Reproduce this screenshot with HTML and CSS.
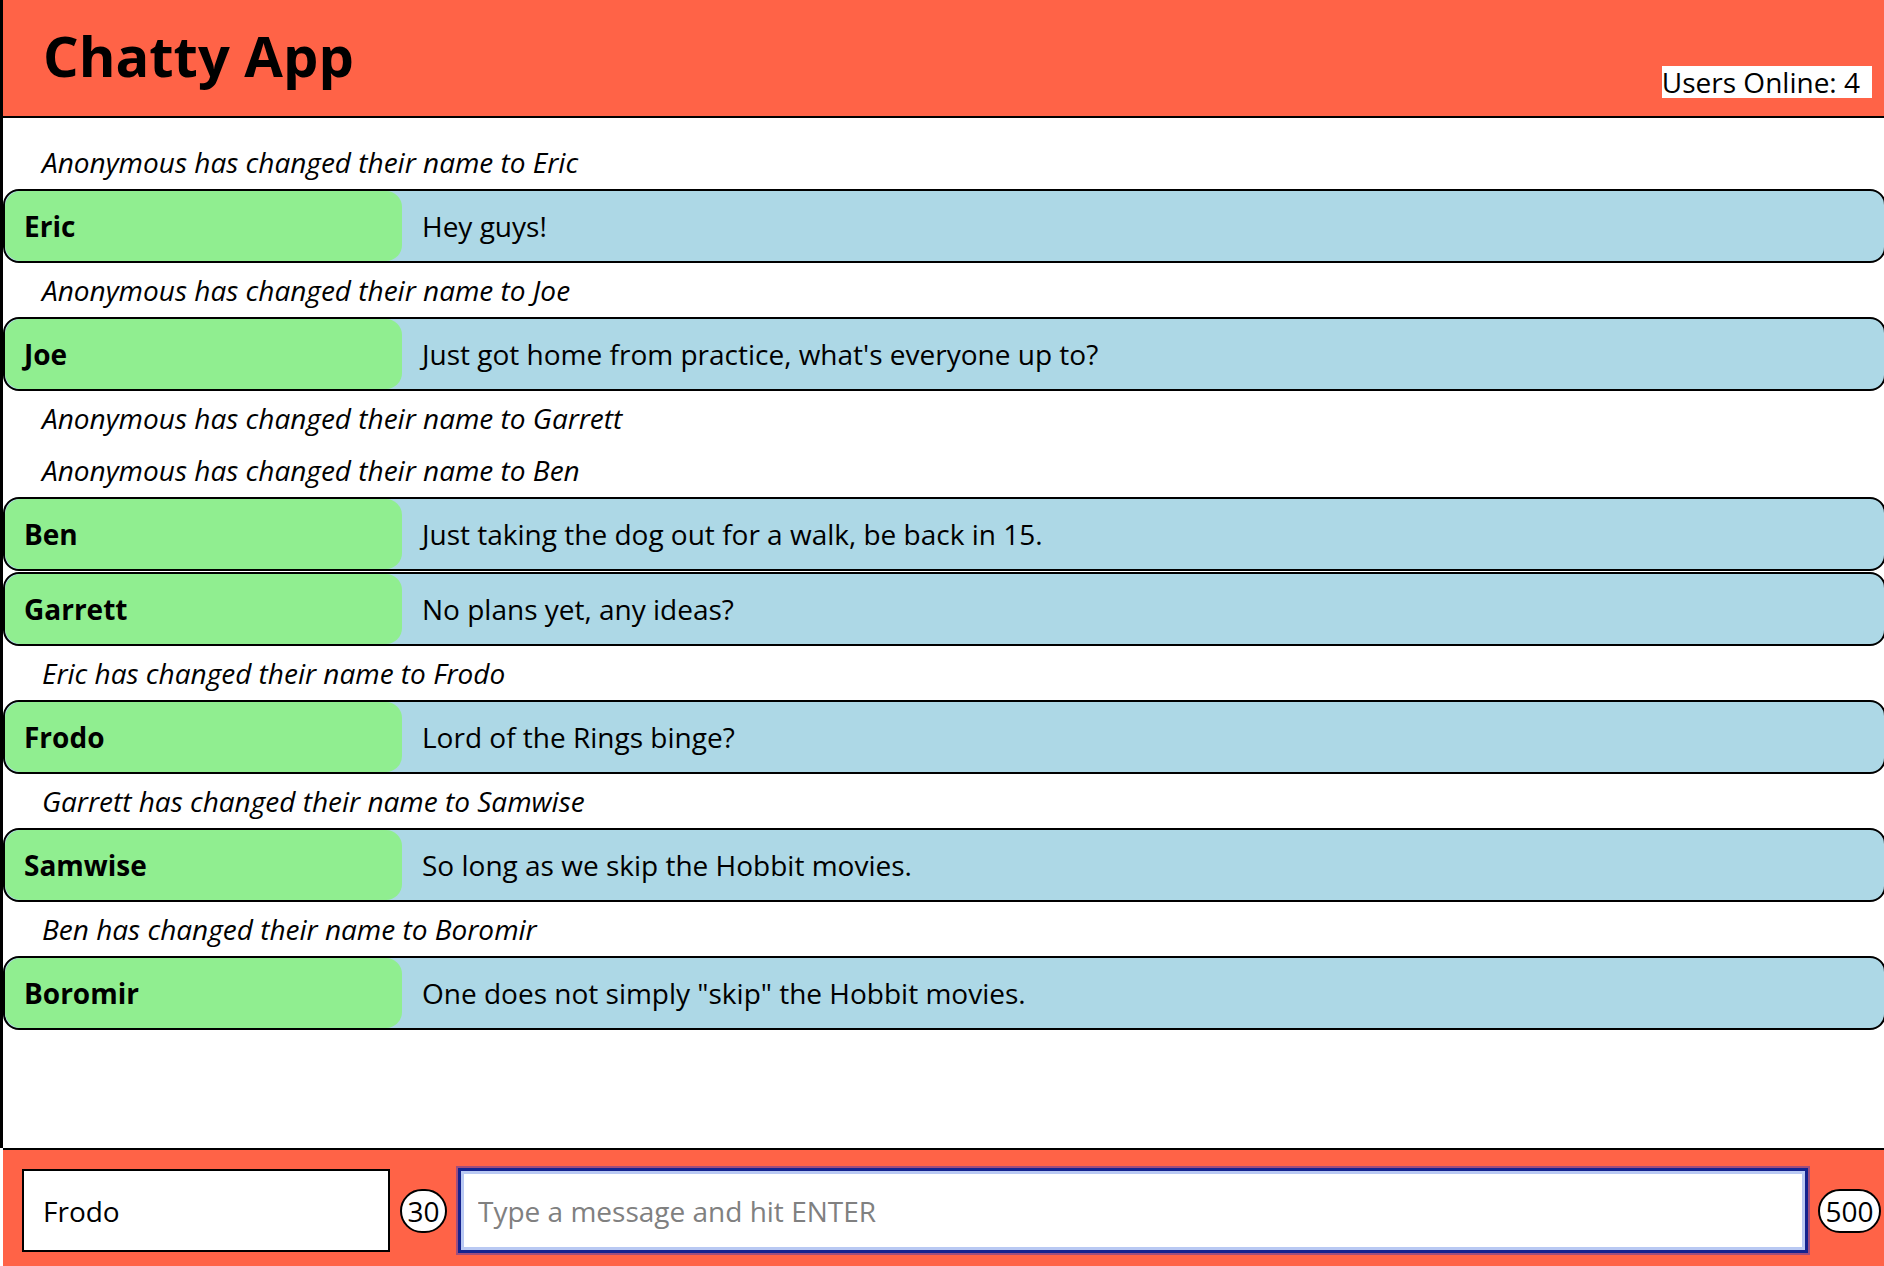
FILE: index.html
```html
<!DOCTYPE html>
<html lang="en">
<head>
<meta charset="utf-8">
<title>Chatty App</title>
<link rel="stylesheet" href="styles.css">
</head>
<body>
<div class="app">
  <nav class="navbar">
    <h1 class="brand">Chatty App</h1>
    <span class="online">Users Online: 4</span>
  </nav>
  <main class="messages">
    <div class="notification">Anonymous has changed their name to Eric</div>
    <div class="message"><span class="username">Eric</span><span class="content">Hey guys!</span></div>
    <div class="notification">Anonymous has changed their name to Joe</div>
    <div class="message"><span class="username">Joe</span><span class="content">Just got home from practice, what's everyone up to?</span></div>
    <div class="notification">Anonymous has changed their name to Garrett</div>
    <div class="notification">Anonymous has changed their name to Ben</div>
    <div class="message"><span class="username">Ben</span><span class="content">Just taking the dog out for a walk, be back in 15.</span></div>
    <div class="message"><span class="username">Garrett</span><span class="content">No plans yet, any ideas?</span></div>
    <div class="notification">Eric has changed their name to Frodo</div>
    <div class="message"><span class="username">Frodo</span><span class="content">Lord of the Rings binge?</span></div>
    <div class="notification">Garrett has changed their name to Samwise</div>
    <div class="message"><span class="username">Samwise</span><span class="content">So long as we skip the Hobbit movies.</span></div>
    <div class="notification">Ben has changed their name to Boromir</div>
    <div class="message"><span class="username">Boromir</span><span class="content">One does not simply "skip" the Hobbit movies.</span></div>
  </main>
</div>
<footer class="chatbar">
  <input class="chatbar-username" type="text" value="Frodo">
  <span class="counter">30</span>
  <input class="chatbar-message" type="text" placeholder="Type a message and hit ENTER">
  <span class="counter counter-wide">500</span>
</footer>
</body>
</html>
```
FILE: styles.css
```css
* { box-sizing: border-box; }
html, body { margin: 0; padding: 0; }
body {
  font-family: "Open Sans", "DejaVu Sans", sans-serif;
  font-size: 28px;
  color: #000;
  background: #fff;
  height: 100vh;
  display: flex;
  flex-direction: column;
  overflow: hidden;
}
.app {
  flex: 1;
  border-left: 3px solid #000;
  min-height: 0;
}
.navbar {
  height: 118px;
  background: tomato;
  border-bottom: 2px solid #000;
  display: flex;
  justify-content: space-between;
  align-items: flex-start;
  padding: 0 12px 0 40px;
}
.brand {
  margin: 0;
  margin-top: 24px;
  font-size: 56px;
  font-weight: 700;
  line-height: 62px;
}
.online {
  margin-top: 66px;
  background: #fff;
  height: 32px;
  line-height: 32px;
  padding-right: 12px;
  font-size: 28px;
}
.messages {
  padding-top: 18px;
}
.notification {
  height: 52px;
  line-height: 52px;
  padding-left: 39px;
  font-style: italic;
}
.message {
  display: flex;
  align-items: stretch;
  height: 74px;
  margin: 1px 0;
  background: lightblue;
  border: 2px solid #000;
  border-radius: 16px;
  width: 1883px;
  overflow: hidden;
}
.username {
  width: 397px;
  flex: none;
  background: lightgreen;
  border-radius: 16px;
  font-weight: 700;
  padding-left: 19px;
  display: flex;
  align-items: center;
}
.content {
  padding-left: 20px;
  display: flex;
  align-items: center;
}
.chatbar {
  flex: none;
  height: 118px;
  margin-left: 3px;
  background: tomato;
  border-top: 2px solid #000;
  display: flex;
  align-items: center;
  gap: 10px;
  padding: 5px 3px 0 19px;
}
.chatbar input {
  font-family: "Open Sans", "DejaVu Sans", sans-serif;
  font-size: 28px;
  background: #fff;
  color: #000;
  outline: none;
  margin: 0;
}
.chatbar-username {
  width: 368px;
  height: 83px;
  border: 2px solid #000;
  padding: 0 0 0 19px;
}
.chatbar-message {
  flex: 1;
  height: 85px;
  border: 3px solid #14238f;
  box-shadow: inset 0 0 0 3px #b9c9f3, 0 0 0 2px rgba(80, 60, 170, 0.55);
  padding: 0 0 0 17px;
  margin-left: 1px !important;
}
.chatbar-message::placeholder {
  color: #808080;
  opacity: 1;
}
.counter {
  flex: none;
  height: 44px;
  min-width: 47px;
  line-height: 40px;
  padding: 0 4px;
  border: 2px solid #000;
  border-radius: 22px;
  background: #fff;
  text-align: center;
  font-size: 28px;
}
.counter-wide {
  padding: 0 5.5px;
}
```
